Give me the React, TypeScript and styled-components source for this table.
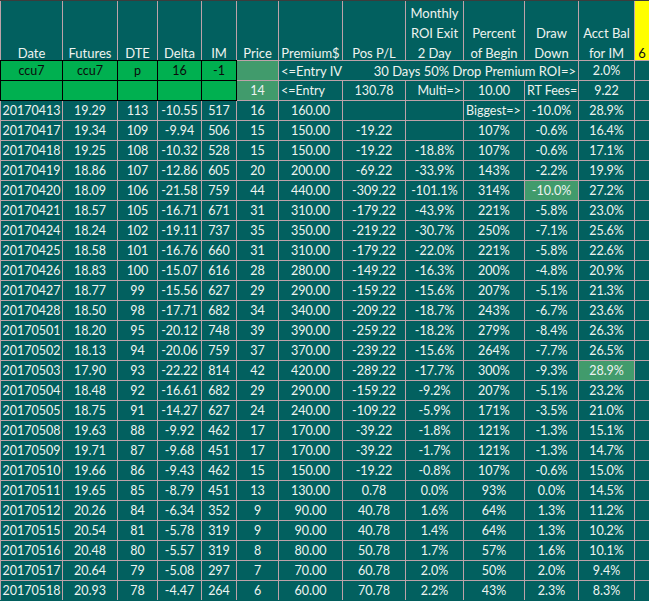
import React from 'react';
import styled, { createGlobalStyle, css } from 'styled-components';

const GlobalStyle = createGlobalStyle`
  html, body {
    margin: 0;
    padding: 0;
    background: #02605f;
  }
  body {
    font-family: 'Lato', 'Liberation Sans', sans-serif;
  }
`;

type Tone = 'teal' | 'green' | 'muted' | 'yellow';
type Align = 'left' | 'center' | 'right';

const Sheet = styled.div`
  display: grid;
  grid-template-columns: 61px 54px 39px 43px 34px 41px 63px 62px 57px 60px 53px 55px 14px;
  grid-auto-rows: 19px;
  grid-template-rows: 59px;
  gap: 1px;
  width: 648px;
  padding-left: 1px;
  background: #bea2a9;
  border-top: 1px solid #3c3c3c;
  font-size: 12.5px;
  color: #eef3f0;
`;

const toneStyles = {
  teal: css`
    background: #02605f;
  `,
  green: css`
    background: #00b050;
    color: #0b0b0b;
    outline: 1px solid #000;
  `,
  muted: css`
    background: #419b6c;
  `,
  yellow: css`
    background: #ffff00;
    color: #111;
  `,
};

const HeaderCell = styled.div<{ $tone?: Tone }>`
  display: flex;
  align-items: flex-end;
  justify-content: center;
  text-align: center;
  white-space: pre-line;
  ${({ $tone = 'teal' }) => toneStyles[$tone]}
`;

const HeaderText = styled.span`
  font-size: 13px;
  line-height: 20px;
  margin-bottom: -3px;
`;

const Cell = styled.div<{ $tone?: Tone; $align?: Align; $span?: number; $clip?: boolean }>`
  display: flex;
  align-items: center;
  justify-content: ${({ $align = 'center' }) =>
    $align === 'left' ? 'flex-start' : $align === 'right' ? 'flex-end' : 'center'};
  padding: 1px 2px 0;
  line-height: 18px;
  white-space: nowrap;
  overflow: ${({ $clip }) => ($clip ? 'hidden' : 'visible')};
  grid-column: ${({ $span = 1 }) => `span ${$span}`};
  ${({ $tone = 'teal' }) => toneStyles[$tone]}
`;

const SpanText = styled.div`
  display: flex;
  justify-content: space-between;
  width: 100%;
  font-size: 13px;
`;

const headers = [
  'Date',
  'Futures',
  'DTE',
  'Delta',
  'IM',
  'Price',
  'Premium$',
  'Pos P/L',
  'Monthly\nROI Exit\n2 Day',
  'Percent\nof Begin',
  'Draw\nDown',
  'Acct Bal\nfor IM',
];

// date, futures, dte, delta, im, price, premium, pos p/l, roi, percent, drawdown, acct bal
const rows: string[][] = [
  ['20170413', '19.29', '113', '-10.55', '517', '16', '160.00', '', '', 'Biggest=>', '-10.0%', '28.9%'],
  ['20170417', '19.34', '109', '-9.94', '506', '15', '150.00', '-19.22', '', '107%', '-0.6%', '16.4%'],
  ['20170418', '19.25', '108', '-10.32', '528', '15', '150.00', '-19.22', '-18.8%', '107%', '-0.6%', '17.1%'],
  ['20170419', '18.86', '107', '-12.86', '605', '20', '200.00', '-69.22', '-33.9%', '143%', '-2.2%', '19.9%'],
  ['20170420', '18.09', '106', '-21.58', '759', '44', '440.00', '-309.22', '-101.1%', '314%', '-10.0%', '27.2%'],
  ['20170421', '18.57', '105', '-16.71', '671', '31', '310.00', '-179.22', '-43.9%', '221%', '-5.8%', '23.0%'],
  ['20170424', '18.24', '102', '-19.11', '737', '35', '350.00', '-219.22', '-30.7%', '250%', '-7.1%', '25.6%'],
  ['20170425', '18.58', '101', '-16.76', '660', '31', '310.00', '-179.22', '-22.0%', '221%', '-5.8%', '22.6%'],
  ['20170426', '18.83', '100', '-15.07', '616', '28', '280.00', '-149.22', '-16.3%', '200%', '-4.8%', '20.9%'],
  ['20170427', '18.77', '99', '-15.56', '627', '29', '290.00', '-159.22', '-15.6%', '207%', '-5.1%', '21.3%'],
  ['20170428', '18.50', '98', '-17.71', '682', '34', '340.00', '-209.22', '-18.7%', '243%', '-6.7%', '23.6%'],
  ['20170501', '18.20', '95', '-20.12', '748', '39', '390.00', '-259.22', '-18.2%', '279%', '-8.4%', '26.3%'],
  ['20170502', '18.13', '94', '-20.06', '759', '37', '370.00', '-239.22', '-15.6%', '264%', '-7.7%', '26.5%'],
  ['20170503', '17.90', '93', '-22.22', '814', '42', '420.00', '-289.22', '-17.7%', '300%', '-9.3%', '28.9%'],
  ['20170504', '18.48', '92', '-16.61', '682', '29', '290.00', '-159.22', '-9.2%', '207%', '-5.1%', '23.2%'],
  ['20170505', '18.75', '91', '-14.27', '627', '24', '240.00', '-109.22', '-5.9%', '171%', '-3.5%', '21.0%'],
  ['20170508', '19.63', '88', '-9.92', '462', '17', '170.00', '-39.22', '-1.8%', '121%', '-1.3%', '15.1%'],
  ['20170509', '19.71', '87', '-9.68', '451', '17', '170.00', '-39.22', '-1.7%', '121%', '-1.3%', '14.7%'],
  ['20170510', '19.66', '86', '-9.43', '462', '15', '150.00', '-19.22', '-0.8%', '107%', '-0.6%', '15.0%'],
  ['20170511', '19.65', '85', '-8.79', '451', '13', '130.00', '0.78', '0.0%', '93%', '0.0%', '14.5%'],
  ['20170512', '20.26', '84', '-6.34', '352', '9', '90.00', '40.78', '1.6%', '64%', '1.3%', '11.2%'],
  ['20170515', '20.54', '81', '-5.78', '319', '9', '90.00', '40.78', '1.4%', '64%', '1.3%', '10.2%'],
  ['20170516', '20.48', '80', '-5.57', '319', '8', '80.00', '50.78', '1.7%', '57%', '1.6%', '10.1%'],
  ['20170517', '20.64', '79', '-5.08', '297', '7', '70.00', '60.78', '2.0%', '50%', '2.0%', '9.4%'],
  ['20170518', '20.93', '78', '-4.47', '264', '6', '60.00', '70.78', '2.2%', '43%', '2.3%', '8.3%'],
];

// cells with the conditional highlight: "row:col"
const highlighted = new Set(['4:10', '13:11']);

const App: React.FC = () => (
  <>
    <GlobalStyle />
    <Sheet>
      {headers.map(h => (
        <HeaderCell key={h}>
          <HeaderText>{h}</HeaderText>
        </HeaderCell>
      ))}
      <HeaderCell $tone="yellow">
        <HeaderText>6</HeaderText>
      </HeaderCell>

      {/* entry inputs */}
      <Cell $tone="green">ccu7</Cell>
      <Cell $tone="green">ccu7</Cell>
      <Cell $tone="green">p</Cell>
      <Cell $tone="green">16</Cell>
      <Cell $tone="green">-1</Cell>
      <Cell $tone="muted" />
      <Cell $span={5} $align="left">
        <SpanText>
          <span>&lt;=Entry IV</span>
          <span>30 Days 50% Drop Premium ROI=&gt;</span>
        </SpanText>
      </Cell>
      <Cell>2.0%</Cell>
      <Cell />

      <Cell $tone="green" />
      <Cell $tone="green" />
      <Cell $tone="green" />
      <Cell $tone="green" />
      <Cell $tone="green" />
      <Cell $tone="muted">14</Cell>
      <Cell $align="left">&lt;=Entry</Cell>
      <Cell>130.78</Cell>
      <Cell $align="right">Multi=&gt;</Cell>
      <Cell>10.00</Cell>
      <Cell $align="left" $clip>RT Fees=&gt;</Cell>
      <Cell>9.22</Cell>
      <Cell />

      {rows.map((row, r) => (
        <React.Fragment key={row[0]}>
          {row.map((value, c) => (
            <Cell
              key={c}
              $align={value === 'Biggest=>' ? 'left' : 'center'}
              $tone={highlighted.has(`${r}:${c}`) ? 'muted' : 'teal'}
            >
              {value}
            </Cell>
          ))}
          <Cell />
        </React.Fragment>
      ))}
    </Sheet>
  </>
);

export default App;
